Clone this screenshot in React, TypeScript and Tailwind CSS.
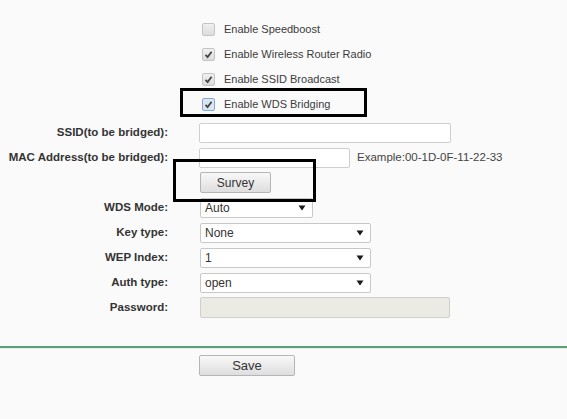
import React from "react";

const font = { fontFamily: '"Liberation Sans", Arial, sans-serif' };

function Check({ checked, focused }: { checked?: boolean; focused?: boolean }) {
  return (
    <span
      className={`ml-[3px] flex h-[13px] w-[13px] items-center justify-center rounded-[2px] border ${
        focused ? "border-[#7fa9d9] bg-[#dbe6f3]" : "border-[#c4c4c4] bg-gradient-to-b from-[#f0f0f0] to-[#dcdcdc]"
      }`}
    >
      {checked && (
        <svg width="9" height="9" viewBox="0 0 9 9">
          <path d="M1.5 4.8 L3.6 7 L7.6 1.8" fill="none" stroke="#444" strokeWidth="1.8" />
        </svg>
      )}
    </span>
  );
}

function Select({ value, width }: { value: string; width: string }) {
  return (
    <div
      className={`flex h-[20px] ${width} items-center justify-between rounded-[2px] border border-[#c8c8c8] bg-white pl-[4px] pr-[6px] text-[12px] text-[#333]`}
    >
      <span>{value}</span>
      <svg width="8" height="6" viewBox="0 0 8 6">
        <path d="M0.5 0.5 H7.5 L4 5.5 Z" fill="#1a1a1a" />
      </svg>
    </div>
  );
}

function Button({ text, width }: { text: string; width: string }) {
  return (
    <button
      className={`h-[21px] ${width} rounded-[2px] border border-[#b5b5b5] bg-gradient-to-b from-[#f8f8f8] to-[#dedede] text-[#333]`}
    >
      {text}
    </button>
  );
}

const rows: { label: string; field: React.ReactNode }[] = [
  {
    label: "SSID(to be bridged):",
    field: <div className="h-[20px] w-[252px] rounded-[2px] border border-[#cfcfcf] bg-white" />,
  },
  {
    label: "MAC Address(to be bridged):",
    field: (
      <div className="flex items-center gap-[7px]">
        <div className="h-[20px] w-[151px] rounded-[2px] border border-[#cfcfcf] bg-white" />
        <span className="text-[11.5px] text-[#444]">Example:00-1D-0F-11-22-33</span>
      </div>
    ),
  },
  { label: "", field: <div className="pl-[1px] text-[12px]"><Button text="Survey" width="w-[71px]" /></div> },
  { label: "WDS Mode:", field: <div className="pl-[1px]"><Select value="Auto" width="w-[113px]" /></div> },
  { label: "Key type:", field: <div className="pl-[1px]"><Select value="None" width="w-[171px]" /></div> },
  { label: "WEP Index:", field: <div className="pl-[1px]"><Select value="1" width="w-[171px]" /></div> },
  { label: "Auth type:", field: <div className="pl-[1px]"><Select value="open" width="w-[171px]" /></div> },
  {
    label: "Password:",
    field: <div className="ml-[1px] h-[21px] w-[250px] rounded-[2px] border border-[#cfcfcf] bg-[#ebebe4]" />,
  },
];

const options = [
  { text: "Enable Speedboost", checked: false },
  { text: "Enable Wireless Router Radio", checked: true },
  { text: "Enable SSID Broadcast", checked: true },
  { text: "Enable WDS Bridging", checked: true, focused: true },
];

export default function App() {
  return (
    <div className="relative h-[419px] w-[567px] overflow-hidden bg-[#fafafa]" style={font}>
      {/* checkboxes */}
      <div className="pt-[17px] pl-[199px]">
        {options.map((o) => (
          <div key={o.text} className="flex h-[25px] items-center gap-[9px] text-[11px] text-[#3a3a3a]">
            <Check checked={o.checked} focused={o.focused} />
            <span>{o.text}</span>
          </div>
        ))}
      </div>

      {/* form */}
      <div className="mt-[3px] grid grid-cols-[168px_1fr] gap-x-[31px]">
        {rows.map((r, i) => (
          <React.Fragment key={i}>
            <div className="flex h-[25px] items-center justify-end text-[11.5px] font-bold text-[#333]">{r.label}</div>
            <div className="flex h-[25px] items-center">{r.field}</div>
          </React.Fragment>
        ))}
      </div>

      <div className="mt-[26px] border-t-2 border-[#5b9e78]" />
      <div className="border-t border-[#e6ece8]" />

      <div className="mt-[6px] pl-[199px] text-[13px]">
        <Button text="Save" width="w-[96px]" />
      </div>

      {/* annotation boxes */}
      <div className="absolute left-[180px] top-[88px] h-[29px] w-[187px] border-[3px] border-black" />
      <div className="absolute left-[173px] top-[159px] h-[43px] w-[143px] border-[3px] border-black" />
    </div>
  );
}
